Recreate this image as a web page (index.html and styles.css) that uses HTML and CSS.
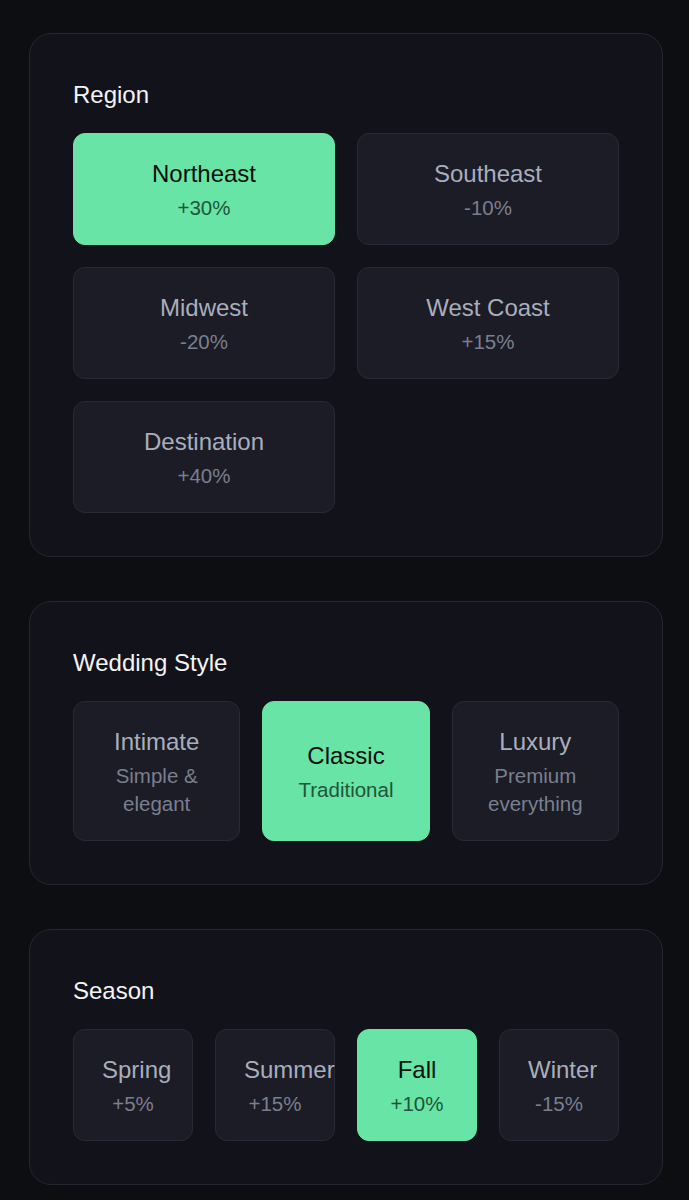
FILE: index.html
```html
<!DOCTYPE html>
<html lang="en">
<head>
<meta charset="utf-8">
<title>Wedding options</title>
<link rel="stylesheet" href="styles.css">
</head>
<body>
<main class="page">
  <section class="card">
    <h2 class="card-title">Region</h2>
    <div class="grid cols-2">
      <button class="opt selected"><span class="opt-name">Northeast</span><span class="opt-sub">+30%</span></button>
      <button class="opt"><span class="opt-name">Southeast</span><span class="opt-sub">-10%</span></button>
      <button class="opt"><span class="opt-name">Midwest</span><span class="opt-sub">-20%</span></button>
      <button class="opt"><span class="opt-name">West Coast</span><span class="opt-sub">+15%</span></button>
      <button class="opt"><span class="opt-name">Destination</span><span class="opt-sub">+40%</span></button>
    </div>
  </section>

  <section class="card">
    <h2 class="card-title">Wedding Style</h2>
    <div class="grid cols-3">
      <button class="opt"><span class="opt-name">Intimate</span><span class="opt-sub">Simple &amp; elegant</span></button>
      <button class="opt selected"><span class="opt-name">Classic</span><span class="opt-sub">Traditional</span></button>
      <button class="opt"><span class="opt-name">Luxury</span><span class="opt-sub">Premium everything</span></button>
    </div>
  </section>

  <section class="card">
    <h2 class="card-title">Season</h2>
    <div class="grid cols-4">
      <button class="opt"><span class="opt-name">Spring</span><span class="opt-sub">+5%</span></button>
      <button class="opt"><span class="opt-name">Summer</span><span class="opt-sub">+15%</span></button>
      <button class="opt selected"><span class="opt-name">Fall</span><span class="opt-sub">+10%</span></button>
      <button class="opt"><span class="opt-name">Winter</span><span class="opt-sub">-15%</span></button>
    </div>
  </section>
</main>
</body>
</html>
```

FILE: styles.css
```css
html, body {
  margin: 0;
  padding: 0;
  background: #0d0e12;
}

body {
  font-family: "Liberation Sans", Arial, sans-serif;
  color: #f2f3f5;
}

.page {
  padding: 33px 26px 40px 29px;
  display: flex;
  flex-direction: column;
  gap: 44px;
}

.card {
  width: 634px;
  box-sizing: border-box;
  background: #12131a;
  border: 1px solid #252631;
  border-radius: 22px;
  padding: 43px;
}

.card-title {
  margin: 0 0 20px 0;
  font-size: 24px;
  line-height: 36px;
  font-weight: 400;
  color: #f4f4f6;
}

.grid {
  display: grid;
  gap: 22px;
}

.cols-2 { grid-template-columns: repeat(2, 1fr); }
.cols-3 { grid-template-columns: repeat(3, 1fr); }
.cols-4 { grid-template-columns: repeat(4, 1fr); }

.opt {
  display: flex;
  flex-direction: column;
  justify-content: center;
  align-items: stretch;
  min-width: 0;
  box-sizing: border-box;
  margin: 0;
  padding: 22px 28px;
  background: #1b1c25;
  border: 1px solid #282a35;
  border-radius: 12px;
  font-family: inherit;
  text-align: center;
  cursor: pointer;
}

.opt-name {
  display: block;
  font-size: 24px;
  line-height: 36px;
  color: #a9aebd;
  white-space: nowrap;
}

.opt-sub {
  display: block;
  margin-top: 2px;
  font-size: 20.5px;
  line-height: 28px;
  color: #7a7f8f;
}

.opt.selected {
  background: #68e4a6;
  border-color: #68e4a6;
}

.opt.selected .opt-name {
  color: #0b100d;
}

.opt.selected .opt-sub {
  color: #1d5638;
}
```
